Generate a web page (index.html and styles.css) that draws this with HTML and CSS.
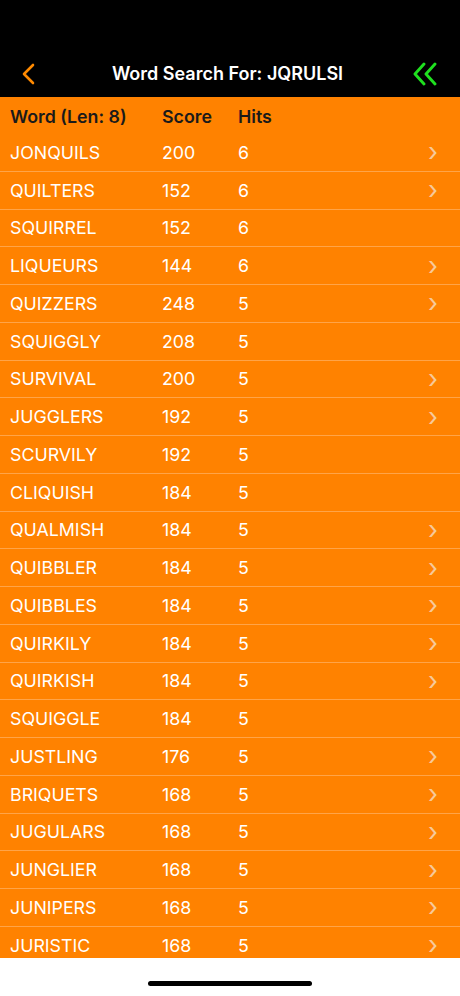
FILE: index.html
```html
<!DOCTYPE html>
<html lang="en">
<head>
    <meta charset="UTF-8">
    <meta name="viewport" content="width=device-width, initial-scale=1.0">
    <title>Word Search</title>
    <link rel="stylesheet" href="styles.css">
</head>
<body>
    <!-- top bar -->
    <div class="topbar">
        <div class="nav">
            <svg class="back" width="16" height="22" viewBox="0 0 16 22"><path d="M12 2 L3 11 L12 20" fill="none" stroke="#ff8a00" stroke-width="2.6" stroke-linecap="round" stroke-linejoin="round"/></svg>
            <div class="title">Word Search For: JQRULSI</div>
            <svg class="dbl" width="26" height="24" viewBox="0 0 26 24"><path d="M12 2 L3 12 L12 22 M23 2 L14 12 L23 22" fill="none" stroke="#1fe01f" stroke-width="2.9" stroke-linecap="round" stroke-linejoin="round"/></svg>
        </div>
    </div>

    <!-- word list -->
    <div class="list">
        <div class="head">
            <span>Word (Len: 8)</span><span>Score</span><span>Hits</span><span></span>
        </div>
        <div class="row"><span>JONQUILS</span><span>200</span><span>6</span><span class="chev">&#x203A;</span></div>
        <div class="row"><span>QUILTERS</span><span>152</span><span>6</span><span class="chev">&#x203A;</span></div>
        <div class="row"><span>SQUIRREL</span><span>152</span><span>6</span><span></span></div>
        <div class="row"><span>LIQUEURS</span><span>144</span><span>6</span><span class="chev">&#x203A;</span></div>
        <div class="row"><span>QUIZZERS</span><span>248</span><span>5</span><span class="chev">&#x203A;</span></div>
        <div class="row"><span>SQUIGGLY</span><span>208</span><span>5</span><span></span></div>
        <div class="row"><span>SURVIVAL</span><span>200</span><span>5</span><span class="chev">&#x203A;</span></div>
        <div class="row"><span>JUGGLERS</span><span>192</span><span>5</span><span class="chev">&#x203A;</span></div>
        <div class="row"><span>SCURVILY</span><span>192</span><span>5</span><span></span></div>
        <div class="row"><span>CLIQUISH</span><span>184</span><span>5</span><span></span></div>
        <div class="row"><span>QUALMISH</span><span>184</span><span>5</span><span class="chev">&#x203A;</span></div>
        <div class="row"><span>QUIBBLER</span><span>184</span><span>5</span><span class="chev">&#x203A;</span></div>
        <div class="row"><span>QUIBBLES</span><span>184</span><span>5</span><span class="chev">&#x203A;</span></div>
        <div class="row"><span>QUIRKILY</span><span>184</span><span>5</span><span class="chev">&#x203A;</span></div>
        <div class="row"><span>QUIRKISH</span><span>184</span><span>5</span><span class="chev">&#x203A;</span></div>
        <div class="row"><span>SQUIGGLE</span><span>184</span><span>5</span><span></span></div>
        <div class="row"><span>JUSTLING</span><span>176</span><span>5</span><span class="chev">&#x203A;</span></div>
        <div class="row"><span>BRIQUETS</span><span>168</span><span>5</span><span class="chev">&#x203A;</span></div>
        <div class="row"><span>JUGULARS</span><span>168</span><span>5</span><span class="chev">&#x203A;</span></div>
        <div class="row"><span>JUNGLIER</span><span>168</span><span>5</span><span class="chev">&#x203A;</span></div>
        <div class="row"><span>JUNIPERS</span><span>168</span><span>5</span><span class="chev">&#x203A;</span></div>
        <div class="row"><span>JURISTIC</span><span>168</span><span>5</span><span class="chev">&#x203A;</span></div>
    </div>

    <!-- home indicator -->
    <div class="bottom"><div class="home"></div></div>
</body>
</html>
```

FILE: styles.css
```css
body {
    font-family: Inter, "Liberation Sans", sans-serif;
    margin: 0;
    padding: 0;
    background-color: #fff;
    width: 460px;
    height: 996px;
    overflow: hidden;
}
.topbar {
    background-color: #000;
    height: 97px;
    padding-top: 50px;
    box-sizing: border-box;
}
.nav {
    height: 47px;
    display: flex;
    align-items: center;
    justify-content: space-between;
    padding: 0 22px 0 21px;
}
.title {
    color: #fff;
    font-size: 18px;
    font-weight: 600;
    margin-left: 6px;
}
.list {
    background-color: #ff8200;
    height: 861px;
    overflow: hidden;
}
.head, .row {
    display: grid;
    grid-template-columns: 152px 76px 1fr 30px;
    align-items: center;
    padding-left: 10px;
    font-size: 17.8px;
}
.head {
    height: 37px;
    padding-top: 2px;
    box-sizing: border-box;
    color: #1a1a1a;
    font-weight: 600;
}
.row {
    height: 37.75px;
    box-sizing: border-box;
    color: #fff;
    border-bottom: 1px solid #ffa448;
}
.chev {
    color: #f7c99a;
    font-size: 26px;
    line-height: 20px;
    margin-left: -2px;
}
.bottom {
    height: 38px;
    display: flex;
    justify-content: center;
    padding-top: 23px;
    box-sizing: border-box;
}
.home {
    width: 164px;
    height: 5px;
    border-radius: 3px;
    background-color: #000;
}
```
